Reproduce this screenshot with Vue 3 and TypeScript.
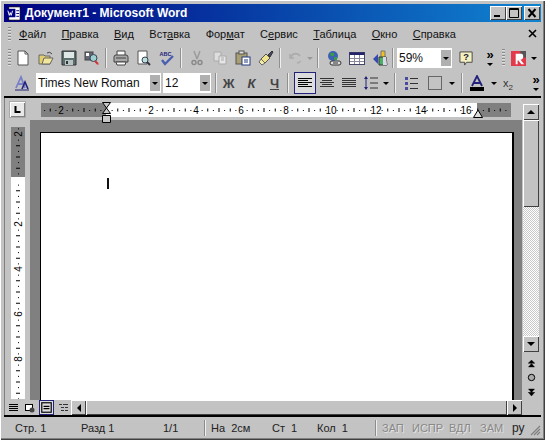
<script setup lang="ts">
interface Menu { pre: string; key: string; post: string }
const menus: Menu[] = [
  { pre: '', key: 'Ф', post: 'айл' },
  { pre: '', key: 'П', post: 'равка' },
  { pre: '', key: 'В', post: 'ид' },
  { pre: 'Вст', key: 'а', post: 'вка' },
  { pre: 'Фор', key: 'м', post: 'ат' },
  { pre: 'С', key: 'е', post: 'рвис' },
  { pre: '', key: 'Т', post: 'аблица' },
  { pre: '', key: 'О', post: 'кно' },
  { pre: '', key: 'С', post: 'правка' },
]
const UNIT = 22.5
const hOrigin = 65
const vOrigin = 52
const cms = Array.from({ length: 21 }, (_, i) => i - 3)
const label = (c: number) => String(Math.abs(c))
const vCms = Array.from({ length: 13 }, (_, i) => i - 3)
const statusLeft = [
  { text: 'Стр. 1', w: 66, cls: 'p' },
  { text: 'Разд 1', w: 82, cls: 'p' },
  { text: '1/1', w: 48, cls: 'p' },
]
const indicators = [
  { text: 'ЗАП', w: 30 },
  { text: 'ИСПР', w: 37 },
  { text: 'ВДЛ', w: 31 },
  { text: 'ЗАМ', w: 31 },
]
</script>

<template>
  <div class="window">
    <div class="titlebar">
      <svg class="appicon" viewBox="0 0 16 16"><rect x="3" y="1" width="12" height="14" fill="#fff" stroke="#000" stroke-width=".7"/><rect x="1" y="3" width="9" height="9" fill="#000080"/><path d="M2 5l1.5 5 1-3 1 3L7 5" stroke="#fff" fill="none"/><path d="M11 5h3M11 8h3M11 11h3" stroke="#000080"/></svg>
      <span class="title">Документ1 - Microsoft Word</span>
      <div class="winbtns">
        <button class="wb"><svg viewBox="0 0 14 12"><rect x="3" y="8" width="6" height="2"/></svg></button>
        <button class="wb"><svg viewBox="0 0 14 12"><path d="M2.5 1.5h9v9h-9zM2 2.5h10" fill="none" stroke="#000"/></svg></button>
        <button class="wb close"><svg viewBox="0 0 14 12"><path d="M3.5 2l7 8M10.5 2l-7 8" stroke="#000" stroke-width="2"/></svg></button>
      </div>
    </div>

    <div class="menubar">
      <span class="grip"></span>
      <span v-for="m in menus" :key="m.pre + m.key + m.post">{{ m.pre }}<u>{{ m.key }}</u>{{ m.post }}</span>
      <svg class="menuclose" viewBox="0 0 10 10"><path d="M1 1l7 7M8 1l-7 7" stroke="#000" stroke-width="1.6"/></svg>
    </div>

    <div class="bar tb1">
      <span class="grip"></span>
      <i class="ic"><svg viewBox="0 0 16 16"><path d="M3 1h7l3 3v11H3z" fill="#fff" stroke="#555"/><path d="M10 1v3h3" fill="none" stroke="#555"/></svg></i>
      <i class="ic"><svg viewBox="0 0 16 16"><path d="M1 5h5l1 1h5v8H1z" fill="#e0d070" stroke="#666"/><path d="M4 14l2-6h9l-3 6z" fill="#f2e69a" stroke="#666"/><path d="M9 3q3-2 5 1" fill="none" stroke="#444"/></svg></i>
      <i class="ic"><svg viewBox="0 0 16 16"><path d="M1 1h14v14H1z" fill="#5c6f6f" stroke="#333"/><rect x="3" y="2" width="10" height="6" fill="#dfe6e6"/><rect x="4" y="10" width="8" height="5" fill="#b8c4c4"/><rect x="5" y="11" width="2" height="3" fill="#333"/></svg></i>
      <i class="ic"><svg viewBox="0 0 16 16"><rect x="1" y="2" width="8" height="8" fill="#667" stroke="#444"/><rect x="2" y="3" width="3" height="3" fill="#fff"/><circle cx="9.5" cy="8" r="3.5" fill="#9ecfd0" stroke="#345"/><path d="M11 11l3 3" stroke="#c33" stroke-width="2"/><path d="M12 15l3-2v2z" fill="#e07a88"/></svg></i>
      <span class="sep"></span>
      <i class="ic"><svg viewBox="0 0 16 16"><path d="M4 1h8v5H4z" fill="#fff" stroke="#444"/><path d="M1 7q0-2 2-2h10q2 0 2 2v5H1z" fill="#a8a8a8" stroke="#444"/><path d="M3 12h10l-1 3H4z" fill="#fff" stroke="#444"/><path d="M3 8h10" stroke="#444"/></svg></i>
      <i class="ic"><svg viewBox="0 0 16 16"><path d="M2 1h9v13H2z" fill="#fff" stroke="#555"/><circle cx="9" cy="10" r="3" fill="#bfe0d8" stroke="#345"/><path d="M11 12l3 3" stroke="#334" stroke-width="2"/></svg></i>
      <i class="ic"><svg viewBox="0 0 16 16"><text x="0.5" y="6" class="abc">ABC</text><path d="M3 10l3 4 8-8" fill="none" stroke="#4a5fb0" stroke-width="2.4"/></svg></i>
      <span class="sep s2"></span>
      <i class="ic"><svg viewBox="0 0 16 16"><path d="M5 1l3 8M11 1L8 9" stroke="#999" stroke-width="1.4" fill="none"/><circle cx="5" cy="12.5" r="2" fill="none" stroke="#888" stroke-width="1.4"/><circle cx="11" cy="12.5" r="2" fill="none" stroke="#888" stroke-width="1.4"/></svg></i>
      <i class="ic"><svg viewBox="0 0 16 16"><path d="M2 2h7v9H2z" fill="#ddd" stroke="#aaa"/><path d="M7 6h7v8H7z" fill="#e6e6e6" stroke="#aaa"/><path d="M9 8h3M9 10h3" stroke="#aaa"/></svg></i>
      <i class="ic"><svg viewBox="0 0 16 16"><rect x="1" y="3" width="11" height="11" fill="#a99f72" stroke="#555"/><rect x="4" y="1" width="5" height="3" fill="#ddd" stroke="#555"/><rect x="7" y="7" width="8" height="8" fill="#fff" stroke="#223a80"/><path d="M9 10h4M9 12h4" stroke="#223a80"/></svg></i>
      <i class="ic"><svg viewBox="0 0 16 16"><path d="M3 9l5-5 4 4-5 5z" fill="#efe38c" stroke="#555"/><path d="M3 9l-2 3 3 3 3-2z" fill="#f5ecaa" stroke="#666"/><path d="M10 5l4-4 1 1-3 5z" fill="#4a4a66" stroke="#333"/></svg></i>
      <span class="sep s3"></span>
      <i class="ic"><svg viewBox="0 0 16 16"><path d="M3 7a5 5 0 0 1 9-1" fill="none" stroke="#aaa" stroke-width="1.6"/><path d="M2 4v4h4M9 13c2 0 3-1 3.500-2" fill="none" stroke="#aaa" stroke-width="1.4"/></svg></i>
      <span class="drop dim"></span>
      <span class="sep s4"></span>
      <i class="ic"><svg viewBox="0 0 16 16"><circle cx="7" cy="6" r="5" fill="#3d62b0"/><path d="M4 3h4v3H5zM8 7h3v3H8z" fill="#3a9a4a"/><rect x="4" y="11" width="11" height="4" rx="2" fill="#ddd" stroke="#333"/><path d="M7 13h5" stroke="#333"/></svg></i>
      <i class="ic"><svg viewBox="0 0 16 16"><rect x="0.500" y="2.500" width="15" height="12" fill="#fff" stroke="#446"/><rect x="0.500" y="2.500" width="15" height="2.500" fill="#24246a"/><path d="M5.500 5v9M10.500 5v9M1 8.500h14M1 11.500h14" stroke="#889"/></svg></i>
      <i class="ic"><svg viewBox="0 0 16 16"><path d="M9 1h4v7H9z" fill="#f0c020" stroke="#777"/><path d="M1 9l5-5v10z" fill="#3848b0"/><path d="M7 7h7l1 8H7z" fill="#4caf68" stroke="#333"/><path d="M11 7h3l1 8h-4z" fill="#d8d8e8"/></svg></i>
      <span class="sep s5"></span>
      <div class="combo zoom"><span>59%</span><b class="arrow"></b></div>
      <i class="ic help"><svg viewBox="0 0 16 16"><path d="M1 1h13v11H8l-2 3v-3H1z" fill="#f4f0c0" stroke="#444"/><text x="4.500" y="10" class="q">?</text></svg></i>
      <span class="more m1"><span>»</span><em></em></span>
      <span class="grip g2"></span>
      <i class="ic logo"><svg viewBox="0 0 16 16"><rect x="0" y="0" width="16" height="16" fill="#e23a4a"/><path d="M10 0h6v7h-6z" fill="#555"/><path d="M5 3h6q2 0 2 3t-3 3l4 5h-3L8 10H7v4H5z" fill="#fff"/></svg></i>
      <span class="drop"></span>
    </div>

    <div class="bar tb2">
      <i class="ic style"><svg viewBox="0 0 16 16"><path d="M2 13l5-11 4 11M4 9h6" fill="none" stroke="#7a80c8" stroke-width="1.8"/><path d="M8 14l3-7 3 7" fill="none" stroke="#22227a" stroke-width="1.600"/><path d="M1 15h14" stroke="#22227a"/></svg></i>
      <div class="combo font"><span>Times New Roman</span><b class="arrow"></b></div>
      <div class="combo size"><span>12</span><b class="arrow"></b></div>
      <span class="sep s6"></span>
      <span class="fmt bold">Ж</span>
      <span class="fmt ital">К</span>
      <span class="fmt und">Ч</span>
      <span class="sep s7"></span>
      <i class="ic on"><svg viewBox="0 0 16 14"><path d="M1 2.500h14M1 4.500h10M1 6.500h14M1 8.500h10M1 10.500h14" stroke="#000"/></svg></i>
      <i class="ic"><svg viewBox="0 0 16 14"><path d="M1 2.500h14M3 4.500h10M1 6.500h14M3 8.500h10M1 10.500h14" stroke="#333"/></svg></i>
      <i class="ic"><svg viewBox="0 0 16 14"><path d="M1 2.500h14M1 4.500h14M1 6.500h14M1 8.500h14M1 10.500h14" stroke="#333"/></svg></i>
      <i class="ic"><svg viewBox="0 0 16 16"><path d="M3 2v12" stroke="#22227a"/><path d="M1 4l2-3 2 3zM1 12l2 3 2-3z" fill="#22227a"/><path d="M7 3h8M7 8h8M7 13h8" stroke="#333"/></svg></i>
      <span class="drop d2"></span>
      <span class="sep s8"></span>
      <i class="ic"><svg viewBox="0 0 16 16"><rect x="2" y="2" width="3" height="3" fill="#4a4aa0"/><rect x="2" y="7" width="3" height="3" fill="#4a4aa0"/><rect x="2" y="12" width="3" height="3" fill="#4a4aa0"/><path d="M7 3.500h8M7 8.500h8M7 13.500h8" stroke="#333"/></svg></i>
      <i class="ic bd"><svg viewBox="0 0 16 16"><rect x="1.500" y="1.500" width="13" height="13" fill="none" stroke="#666"/></svg></i>
      <span class="drop"></span>
      <span class="sep s9"></span>
      <i class="ic"><svg viewBox="0 0 16 16"><path d="M3 11L8 1l5 10M5 8h6" fill="none" stroke="#22227a" stroke-width="1.800"/><rect x="1" y="12" width="14" height="4"/></svg></i>
      <span class="drop"></span>
      <span class="sub">x<small>2</small></span>
      <span class="more m2"><span>»</span><em></em></span>
    </div>

    <div class="workspace">
      <div class="corner">
        <button class="tabstop"><svg viewBox="0 0 9 9"><path d="M2.500 1v6h5" fill="none" stroke="#000" stroke-width="2"/></svg></button>
      </div>
      <div class="hruler-wrap">
        <svg class="hruler" width="470" height="14" viewBox="0 0 470 14">
          <rect x="0" y="0" width="470" height="14" fill="#808080"/>
          <rect x="65" y="0" width="371" height="14" fill="#fff"/>
          <g v-for="c in cms" :key="c">
            <template v-if="c % 2 === 0 && c !== 0 && c < 18">
              <text :x="hOrigin + c * UNIT" y="11" class="rnum" text-anchor="middle">{{ label(c) }}</text>
            </template>
            <rect v-else-if="c !== 0" :x="hOrigin + c * UNIT" y="5" width="1" height="4" fill="#000"/>
            <rect :x="hOrigin + (c + .25) * UNIT" y="7" width="1" height="1" fill="#000"/>
            <rect :x="hOrigin + (c + .5) * UNIT" y="5.500" width="1" height="3" fill="#000"/>
            <rect :x="hOrigin + (c + .75) * UNIT" y="7" width="1" height="1" fill="#000"/>
          </g>
        </svg>
        <svg class="indent" width="14" height="24" viewBox="0 0 14 24"><path d="M2.500 1.500h8L6.500 7l4 5.500h-8L6.500 7z" fill="#c8c8c8" stroke="#000"/><path d="M2.500 14.500h8v7h-8z" fill="#c8c8c8" stroke="#000"/></svg>
        <svg class="rindent" width="12" height="10" viewBox="0 0 12 10"><path d="M6 1l4.500 7.500h-9z" fill="#ddd" stroke="#000"/></svg>
      </div>
      <div class="vscroll">
        <button class="sb up"><b></b></button>
        <div class="thumb"></div>
        <div class="track"></div>
        <button class="sb dn"><b></b></button>
        <div class="browse">
          <svg viewBox="0 0 9 9"><path d="M1 4.500h7M4.500 1L1.500 4h6zM4.500 4.500L1.500 8h6z" fill="#000" stroke="#000" stroke-width=".4"/></svg>
          <svg viewBox="0 0 9 9"><circle cx="4.500" cy="4.500" r="3.200" fill="#aaa" stroke="#000"/></svg>
          <svg viewBox="0 0 9 9"><path d="M1 4.500h7M4.500 4.500L1.500 1h6zM4.500 8L1.500 4.500h6z" fill="#000" stroke="#000" stroke-width=".4"/></svg>
        </div>
      </div>
      <div class="vruler-col">
        <svg class="vruler" width="14" height="272" viewBox="0 0 14 272">
          <rect width="14" height="272" fill="#fff"/>
          <rect width="14" height="50" fill="#808080"/>
          <g v-for="c in vCms" :key="c">
            <text v-if="c % 2 === 0 && c !== 0" class="rnum" text-anchor="middle" :transform="`translate(11 ${vOrigin + c * UNIT}) rotate(-90)`">{{ label(c) }}</text>
            <rect v-else-if="c !== 0" x="5" :y="vOrigin + c * UNIT" width="4" height="1" fill="#000"/>
            <rect x="7" :y="vOrigin + (c + .25) * UNIT" width="1" height="1" fill="#000"/>
            <rect x="5" :y="vOrigin + (c + .5) * UNIT" width="4" height="1" fill="#000"/>
            <rect x="7" :y="vOrigin + (c + .75) * UNIT" width="1" height="1" fill="#000"/>
          </g>
        </svg>
      </div>
      <div class="desk">
        <div class="page"><span class="caret"></span></div>
      </div>
      <div class="hbar">
        <div class="views">
          <svg viewBox="0 0 11 11"><path d="M1 2.500h9M1 4.500h9M1 6.500h9M1 8.500h9" stroke="#000"/></svg>
          <svg viewBox="0 0 11 11"><rect x="1.500" y="2.500" width="7" height="6" fill="#fff" stroke="#000"/><circle cx="8" cy="8" r="2.500" fill="#444"/></svg>
          <svg class="act" viewBox="0 0 11 11"><rect x="1.500" y="1.500" width="8" height="8" fill="none" stroke="#000"/><path d="M3 4.500h5M3 6.500h5" stroke="#000"/></svg>
          <svg viewBox="0 0 11 11"><path d="M1 2.500h3M5 2.500h5M3 5.500h3M7 5.500h3M3 8.500h3M7 8.500h3" stroke="#333"/></svg>
        </div>
        <button class="sb lf"><b></b></button>
        <div class="hthumb"></div>
        <button class="sb rt"><b></b></button>
      </div>
      <div class="blank"></div>
    </div>

    <div class="status">
      <span v-for="s in statusLeft" :key="s.text" class="cell" :style="{ width: s.w + 'px' }">{{ s.text }}</span>
      <span class="div"></span>
      <span class="cell c1">На&nbsp; 2см</span>
      <span class="cell c2">Ст&nbsp; 1</span>
      <span class="cell c3">Кол&nbsp; 1</span>
      <span class="div"></span>
      <span v-for="d in indicators" :key="d.text" class="cell ind" :style="{ width: d.w + 'px' }">{{ d.text }}</span>
      <span class="cell lang">ру</span>
      <svg class="sizer" viewBox="0 0 12 12"><path d="M11 2L2 11M11 5l-6 6M11 8l-3 3" stroke="#808080" stroke-width="1.200"/></svg>
    </div>
  </div>
</template>

<style scoped>
.window {
  width: 545px;
  height: 440px;
  box-sizing: border-box;
  padding: 4px 4px 3px;
  background: #c3c3c3;
  display: flex;
  flex-direction: column;
  overflow: hidden;
  box-shadow: inset 1px 1px 0 #fff, inset -1px -1px 0 #404040, inset -2px -2px 0 #808080;
  font-family: "Liberation Sans", Arial, sans-serif;
  color: #000;
}
.titlebar {
  height: 18px;
  flex: none;
  display: flex;
  align-items: center;
  padding: 0 1px 0 2px;
  background: linear-gradient(90deg, #000080, #1084d0);
}
.appicon { width: 15px; height: 15px; flex: none; }
.title {
  margin-left: 4px;
  font-size: 12px;
  font-weight: 700;
  color: #fff;
  white-space: nowrap;
}
.winbtns { margin-left: auto; display: flex; }
.wb {
  width: 16px;
  height: 14px;
  padding: 0;
  border: 0;
  background: #c3c3c3;
  box-shadow: inset 1px 1px 0 #fff, inset -1px -1px 0 #404040;
  display: block;
}
.wb svg { width: 14px; height: 12px; display: block; margin: 1px; }
.wb.close { margin-left: 2px; }
.menubar {
  height: 24px;
  flex: none;
  display: flex;
  align-items: center;
  gap: 15.400px;
  font-size: 11px;
  position: relative;
  padding-left: 4px;
  color: #111;
}
.menubar .grip { margin-right: -7.400px; height: 15px; }
.menubar u { text-underline-offset: 1px; }
.menuclose { width: 10px; height: 10px; margin-left: auto; margin-right: 3px; }
.grip {
  width: 3px;
  height: 18px;
  flex: none;
  background: repeating-linear-gradient(#8a8a8a 0 1px, #dedede 1px 2px, transparent 2px 3px);
}
.bar {
  height: 24px;
  flex: none;
  display: flex;
  align-items: center;
  padding-left: 4px;
}
.tb2 { height: 26px; padding-left: 7px; }
.ic {
  width: 23px;
  height: 22px;
  flex: none;
  display: flex;
  align-items: center;
  justify-content: center;
  box-sizing: border-box;
}
.ic svg { width: 16px; height: 16px; display: block; }
.ic.on { outline: 1px solid #22227a; outline-offset: -1px; background: #dcdcdc; }
.abc { font: 700 5.500px "Liberation Sans", sans-serif; fill: #22227a; }
.q { font: 700 10px "Liberation Sans", sans-serif; fill: #223; }
.sep {
  width: 2px;
  height: 20px;
  flex: none;
  margin: 0 2px;
  background: linear-gradient(90deg, #909090 50%, #eee 50%);
}
.s2, .s3, .s4 { margin: 0 3px 0 2px; }
.s5 { margin: 0 3px 0 1px; }
.drop {
  width: 0;
  height: 0;
  flex: none;
  margin: 0 3px;
  border: 3px solid transparent;
  border-top: 3px solid #000;
  border-bottom: 0;
}
.dim { border-top-color: #999; margin: 0 2px 0 0; }
.combo {
  height: 20px;
  flex: none;
  display: flex;
  align-items: center;
  justify-content: space-between;
  box-sizing: border-box;
  background: #fff;
  font-size: 12px;
  padding: 2px 1px 2px 2px;
  color: #111;
}
.combo.zoom { width: 55px; }
.combo.font { width: 125px; margin-left: 3px; }
.combo.size { width: 48px; margin-left: 2px; }
.arrow {
  width: 10px;
  height: 100%;
  flex: none;
  background: #b0b0b0;
  position: relative;
}
.arrow::after {
  content: "";
  position: absolute;
  left: 2px;
  top: 7px;
  border: 3px solid transparent;
  border-top: 3px solid #000;
  border-bottom: 0;
}
.help { margin-left: 3px; }
.help svg { width: 15px; height: 15px; }
.more {
  flex: none;
  width: 12px;
  display: flex;
  flex-direction: column;
  align-items: center;
  font: 700 13px/10px "Liberation Sans", sans-serif;
}
.more em {
  margin-top: 3px;
  border: 3px solid transparent;
  border-top: 3px solid #000;
  border-bottom: 0;
}
.m1 { margin-left: 6px; }
.g2 { margin-left: 6px; }
.logo { width: 19px; margin-left: 4px; }
.logo svg { width: 15px; height: 15px; }
.style { margin-left: 0; width: 22px; }
.s6 { margin: 0 0 0 4px; }
.fmt {
  width: 23px;
  flex: none;
  text-align: center;
  font-size: 13px;
  font-weight: 700;
  color: #444;
}
.bold { margin-left: 0; }
.ital { font-style: italic; }
.und { text-decoration: underline; }
.s7 { margin: 0 5px 0 1px; }
.tb2 .ic.on ~ .ic { width: 22px; }
.tb2 .ic.on { width: 22px; }
.tb2 .ic.bd { margin-left: 2px; }
.d2 { margin: 0 1px 0 1px; }
.s8 { margin: 0 4px 0 4px; }
.s9 { margin: 0 3px 0 3px; }
.sub { width: 20px; margin-left: -2px; flex: none; text-align: center; font-size: 11px; color: #333; }
.sub small { font-size: 8px; position: relative; top: 3px; }
.m2 { margin-left: 12px; }

.workspace {
  flex: none;
  display: grid;
  grid-template-columns: 26px 492px 18px;
  grid-template-rows: 22px 280px 15px;
  border-top: 2px solid #000;
  border-bottom: 2px solid #000;
  box-shadow: inset 1px 0 0 #808080;
}
.corner { display: flex; align-items: center; padding-left: 6px; }
.tabstop {
  width: 15px;
  height: 15px;
  padding: 0;
  border: 0;
  background: #e8e8e8;
  box-shadow: inset 1px 1px 0 #fff, inset -1px -1px 0 #808080, 0 0 0 1px #a8a8a8;
}
.tabstop svg { width: 9px; height: 9px; display: block; margin: 3px; }
.hruler-wrap {
  position: relative;
  display: flex;
  align-items: center;
  padding-left: 11px;
  padding-top: 2px;
}
.hruler { display: block; }
.indent { position: absolute; left: 70px; top: 3px; }
.rindent { position: absolute; left: 442px; top: 11px; }
.rnum { font: 10px "Liberation Sans", sans-serif; fill: #000; }
.vscroll {
  grid-column: 3;
  grid-row: 1 / span 2;
  display: flex;
  flex-direction: column;
  padding: 6px 1px 0;
}
.sb {
  padding: 0;
  border: 0;
  flex: none;
  background: #c3c3c3;
  box-shadow: inset 1px 1px 0 #fff, inset -1px -1px 0 #404040;
  display: flex;
  align-items: center;
  justify-content: center;
  width: 16px;
  height: 16px;
}
.sb b { width: 0; height: 0; border: 4px solid transparent; }
.up b { border-bottom-color: #000; border-top: 0; }
.dn b { border-top-color: #000; border-bottom: 0; }
.lf b { border-right-color: #000; border-left: 0; }
.rt b { border-left-color: #000; border-right: 0; }
.thumb {
  height: 87px;
  flex: none;
  background: #c3c3c3;
  box-shadow: inset 1px 1px 0 #fff, inset -1px -1px 0 #404040;
}
.track {
  flex: 1;
  background: repeating-conic-gradient(#fff 0 25%, #c8c8c8 0 50%) 0 0 / 2px 2px;
}
.browse {
  height: 48px;
  flex: none;
  display: flex;
  flex-direction: column;
  align-items: center;
  justify-content: space-around;
  padding: 4px 0 0;
  box-sizing: border-box;
}
.browse svg { width: 9px; height: 9px; display: block; }
.vruler-col { padding: 7px 0 0 7px; overflow: hidden; }
.vruler { display: block; }
.desk {
  background: #808080;
  padding: 12px 8px 0 10px;
  overflow: hidden;
  min-height: 0;
}
.page {
  height: 100%;
  background: #fff;
  border-top: 1px solid #000;
  border-left: 1px solid #000;
  border-right: 2px solid #000;
  box-sizing: content-box;
  position: relative;
}
.caret {
  position: absolute;
  left: 66px;
  top: 45px;
  width: 2px;
  height: 11px;
  background: #111;
}
.hbar {
  grid-column: 1 / span 2;
  display: flex;
  align-items: stretch;
  padding-left: 4px;
}
.views {
  width: 63px;
  flex: none;
  display: flex;
  align-items: center;
  justify-content: space-between;
  padding-right: 2px;
  box-sizing: border-box;
}
.views svg { width: 11px; height: 11px; }
.views .act {
  width: 13px;
  height: 13px;
  outline: 1px solid #22227a;
  background: #ddd;
}
.hbar .sb { width: 15px; height: 15px; }
.hthumb {
  flex: 1;
  background: #c3c3c3;
  box-shadow: inset 1px 1px 0 #fff, inset -1px -1px 0 #404040;
}
.blank { background: #c3c3c3; }

.status {
  flex: 1;
  min-height: 0;
  display: flex;
  align-items: center;
  padding: 2px 0 0 2px;
  font-size: 11px;
  color: #222;
  box-sizing: border-box;
}
.cell {
  flex: none;
  box-sizing: border-box;
  padding-left: 9px;
  white-space: nowrap;
}
.div {
  width: 2px;
  height: 16px;
  flex: none;
  margin: 0 5px 0 2px;
  background: linear-gradient(90deg, #8c8c8c 50%, #eee 50%);
}
.c1 { width: 61px; padding-left: 0; }
.c2 { width: 45px; padding-left: 0; }
.c3 { width: 56px; padding-left: 0; }
.ind { color: #888; padding-left: 0; text-shadow: 1px 1px 0 #e4e4e4; }
.lang { padding-left: 0; font-size: 12px; margin-left: 1px; }
.sizer { width: 12px; height: 12px; margin-left: auto; margin-top: 4px; }
</style>
